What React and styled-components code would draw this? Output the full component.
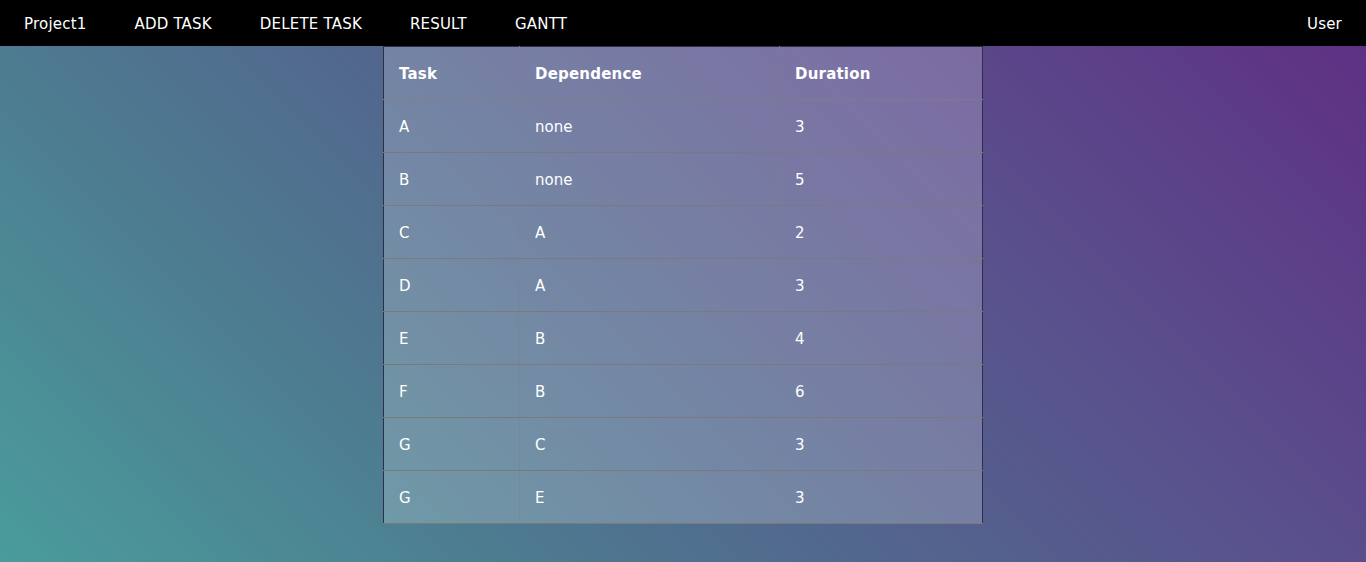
import React from 'react';
import styled, { createGlobalStyle } from 'styled-components';

const GlobalStyle = createGlobalStyle`
  html, body {
    margin: 0;
    padding: 0;
    height: 100%;
  }
  body {
    font-family: "DejaVu Sans", Verdana, sans-serif;
    background: linear-gradient(
      45deg,
      #4a9c9c 0%,
      #4d7c90 26%,
      #516a8e 42%,
      #5a4d8c 71%,
      #5f2e83 100%
    );
    background-attachment: fixed;
    min-height: 562px;
  }
`;

const tasks = [
  { task: 'A', dep: 'none', duration: 3 },
  { task: 'B', dep: 'none', duration: 5 },
  { task: 'C', dep: 'A', duration: 2 },
  { task: 'D', dep: 'A', duration: 3 },
  { task: 'E', dep: 'B', duration: 4 },
  { task: 'F', dep: 'B', duration: 6 },
  { task: 'G', dep: 'C', duration: 3 },
  { task: 'G', dep: 'E', duration: 3 },
];

const App = () => {
  return (
    <Page>
      <GlobalStyle />
      <NavBar>
        <NavGroup>
          <NavItem>Project1</NavItem>
          <NavItem>ADD TASK</NavItem>
          <NavItem>DELETE TASK</NavItem>
          <NavItem>RESULT</NavItem>
          <NavItem>GANTT</NavItem>
        </NavGroup>
        <NavItem>User</NavItem>
      </NavBar>
      <Main>
        <TaskTable>
          <thead>
            <tr>
              <HeadCell $width={136}>Task</HeadCell>
              <HeadCell $width={260}>Dependence</HeadCell>
              <HeadCell>Duration</HeadCell>
            </tr>
          </thead>
          <tbody>
            {tasks.map((t, i) => (
              <tr key={i}>
                <Cell>{t.task}</Cell>
                <Cell>{t.dep}</Cell>
                <Cell>{t.duration}</Cell>
              </tr>
            ))}
          </tbody>
        </TaskTable>
      </Main>
    </Page>
  );
};

export default App;

const Page = styled.div`
  min-height: 562px;
  color: #fff;
`;

const NavBar = styled.nav`
  display: flex;
  justify-content: space-between;
  align-items: center;
  height: 46px;
  background-color: #000;
`;

const NavGroup = styled.div`
  display: flex;
  align-items: center;
`;

const NavItem = styled.a`
  padding: 2px 24px 0;
  font-size: 15px;
  line-height: 44px;
  letter-spacing: 0.2px;
  color: #fff;
  cursor: pointer;
`;

const Main = styled.main`
  display: flex;
  justify-content: center;
`;

const TaskTable = styled.table`
  width: 600px;
  border-collapse: collapse;
  border: 1px solid #2c2f45;
  background-color: rgba(255, 255, 255, 0.2);
  font-size: 15px;
  color: #fff;
`;

const HeadCell = styled.th`
  width: ${({ $width }) => ($width ? `${$width}px` : 'auto')};
  height: 53px;
  padding: 1px 15px 0;
  text-align: left;
  font-weight: bold;
  letter-spacing: 0.2px;
  border-right: 1px solid rgba(128, 128, 128, 0.45);
  border-bottom: 1px solid rgba(128, 128, 128, 0.6);
  box-sizing: border-box;
  &:last-child {
    border-right: none;
  }
`;

const Cell = styled.td`
  height: 53px;
  padding: 2px 15px 0;
  text-align: left;
  box-sizing: border-box;
  border-right: 1px solid rgba(128, 128, 128, 0.45);
  border-bottom: 1px solid #7a7a7a;
  &:last-child {
    border-right: none;
  }
`;
